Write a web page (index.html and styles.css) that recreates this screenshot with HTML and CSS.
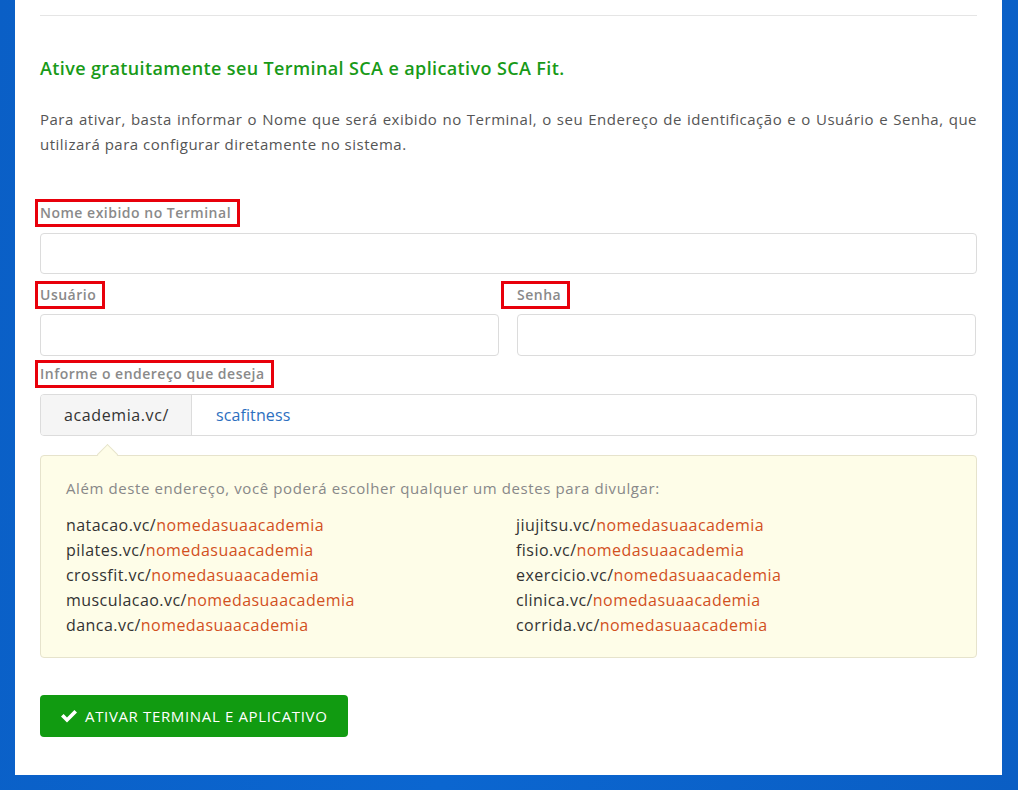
FILE: index.html
```html
<!DOCTYPE html>
<html>
<head>
    <meta charset="utf-8" />
    <title>Ativar Terminal SCA</title>
    <link rel="stylesheet" href="styles.css">
</head>
<body>
<div class="page">
    <div class="card">
        <hr class="divider">

        <h2 class="headline">Ative gratuitamente seu Terminal SCA e aplicativo SCA Fit.</h2>
        <p class="intro">Para ativar, basta informar o Nome que será exibido no Terminal, o seu Endereço de identificação e o Usuário e Senha, que utilizará para configurar diretamente no sistema.</p>

        <!-- Form -->
        <div class="form">
            <div class="field">
                <label class="field-label">Nome exibido no Terminal</label>
                <input class="field-input" type="text">
            </div>

            <div class="row">
                <div class="field">
                    <label class="field-label">Usuário</label>
                    <input class="field-input" type="text">
                </div>
                <div class="field">
                    <label class="field-label field-label-wide">Senha</label>
                    <input class="field-input" type="password">
                </div>
            </div>

            <div class="field">
                <label class="field-label">Informe o endereço que deseja</label>
                <div class="input-group">
                    <span class="addon">academia.vc/</span>
                    <span class="addon-value">scafitness</span>
                </div>
            </div>

            <!-- Alternative domains -->
            <div class="hint-box">
                <div class="hint-text">Além deste endereço, você poderá escolher qualquer um destes para divulgar:</div>
                <div class="domains">
                    <ul class="domain-list">
                        <li>natacao.vc/<span>nomedasuaacademia</span></li>
                        <li>pilates.vc/<span>nomedasuaacademia</span></li>
                        <li>crossfit.vc/<span>nomedasuaacademia</span></li>
                        <li>musculacao.vc/<span>nomedasuaacademia</span></li>
                        <li>danca.vc/<span>nomedasuaacademia</span></li>
                    </ul>
                    <ul class="domain-list">
                        <li>jiujitsu.vc/<span>nomedasuaacademia</span></li>
                        <li>fisio.vc/<span>nomedasuaacademia</span></li>
                        <li>exercicio.vc/<span>nomedasuaacademia</span></li>
                        <li>clinica.vc/<span>nomedasuaacademia</span></li>
                        <li>corrida.vc/<span>nomedasuaacademia</span></li>
                    </ul>
                </div>
            </div>

            <button class="btn-submit" type="button">
                <svg class="check" viewBox="0 0 18 14" width="18" height="14">
                    <path d="M1 7.6 L3.6 5 L7 8.4 L14.4 1 L17 3.6 L7 13.6 Z" fill="#fff"/>
                </svg>
                ATIVAR TERMINAL E APLICATIVO
            </button>
        </div>
    </div>
</div>
</body>
</html>
```

FILE: styles.css
```css
/* ============ page ============ */
* {
  box-sizing: border-box;
}
body {
  margin: 0;
  padding: 0;
  font-family: "Open Sans", "Noto Sans", sans-serif;
  background: linear-gradient(100deg, #0a5fc6 0%, #0b66d0 50%, #0a5ec4 100%);
  color: #555;
}
.page {
  padding: 0 16px 15px 15px;
}
.card {
  background-color: #fff;
  padding: 15px 25px 38px 25px;
}
.divider {
  margin: 0;
  border: none;
  border-top: 1px solid #e5e5e5;
}
.headline {
  margin: 40px 0 0 0;
  font-size: 18px;
  font-weight: 600;
  line-height: 25px;
  letter-spacing: 0.38px;
  color: #189a18;
}
.intro {
  margin: 26px 0 0 0;
  font-size: 15px;
  line-height: 25px;
  letter-spacing: 0.5px;
  text-align: justify;
  color: #555;
}

/* ============ form ============ */
.form {
  margin-top: 42px;
}
.field {
  display: flex;
  flex-direction: column;
  align-items: flex-start;
  margin-bottom: 7px;
}
.row {
  display: flex;
  gap: 18px;
  margin-right: 1px;
}
.row .field {
  flex: 1;
  margin-bottom: 4px;
}
.field-label {
  display: inline-block;
  height: 28px;
  margin-left: -5px;
  padding: 0 6px 0 2px;
  border: 3px solid #e8000b;
  font-size: 14px;
  font-weight: 600;
  line-height: 22px;
  letter-spacing: 0.5px;
  color: #8a8a8a;
}
.field-label-wide {
  margin-left: -16px;
  padding: 0 6px 0 13px;
}
.field-input {
  width: 100%;
  height: 41px;
  margin-top: 6px;
  border: 1px solid #dcdcdc;
  border-radius: 4px;
  font-family: inherit;
  font-size: 15px;
  padding: 0 12px;
  background: #fff;
}
.row .field-input {
  height: 42px;
  margin-top: 5px;
}
.input-group {
  display: flex;
  width: 100%;
  height: 42px;
  margin-top: 6px;
  border: 1px solid #dcdcdc;
  border-radius: 4px;
  font-size: 16px;
  line-height: 40px;
  letter-spacing: 0.6px;
}
.addon {
  width: 151px;
  padding-left: 23px;
  background-color: #f5f5f5;
  border-right: 1px solid #dcdcdc;
  border-radius: 3px 0 0 3px;
  color: #333;
}
.addon-value {
  padding-left: 24px;
  letter-spacing: 0.1px;
  color: #2d6fc0;
}

/* ============ hint box ============ */
.hint-box {
  position: relative;
  margin-top: 19px;
  padding: 20px 25px 19px 25px;
  background-color: #fefde8;
  border: 1px solid #e6e3cc;
  border-radius: 4px;
}
.hint-box:before {
  content: "";
  position: absolute;
  top: -9px;
  left: 59px;
  width: 14px;
  height: 14px;
  background-color: #fefde8;
  border-top: 1px solid #e6e3cc;
  border-left: 1px solid #e6e3cc;
  transform: rotate(45deg);
}
.hint-text {
  font-size: 15px;
  line-height: 25px;
  letter-spacing: 0.6px;
  color: #888;
}
.domains {
  display: grid;
  grid-template-columns: 450px 1fr;
  margin-top: 12px;
}
.domain-list {
  margin: 0;
  padding: 0;
  list-style: none;
  font-size: 16px;
  line-height: 25px;
  letter-spacing: 0.45px;
  color: #333;
}
.domain-list span {
  color: #d2501e;
}

/* ============ button ============ */
.btn-submit {
  display: flex;
  align-items: center;
  gap: 7px;
  height: 42px;
  margin-top: 37px;
  padding: 0 20px 0 20px;
  background-color: #119b11;
  border: none;
  border-radius: 4px;
  color: #fff;
  font-family: inherit;
  font-size: 15px;
  letter-spacing: 0.65px;
  cursor: pointer;
}
.btn-submit:hover {
  background-color: #0e8a0e;
}
```
